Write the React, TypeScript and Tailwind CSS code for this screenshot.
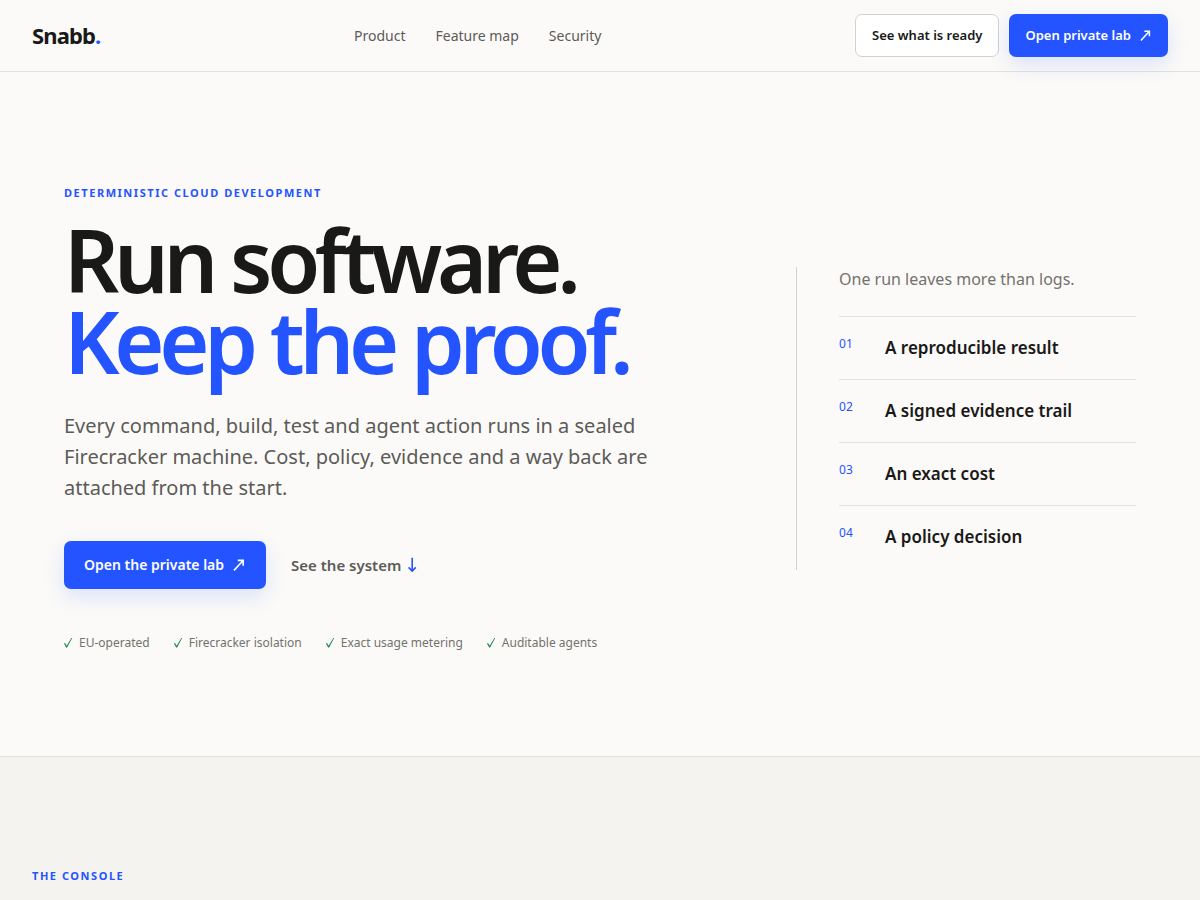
const navLinks = [
  { label: 'Product', href: '#product' },
  { label: 'Feature map', href: '#features' },
  { label: 'Security', href: '#security' },
];

const outcomes = [
  'A reproducible result',
  'A signed evidence trail',
  'An exact cost',
  'A policy decision',
];

const assurances = [
  'EU-operated',
  'Firecracker isolation',
  'Exact usage metering',
  'Auditable agents',
];

function ArrowUpRight({ className }: { className: string }) {
  return (
    <svg viewBox="0 0 14 14" fill="none" stroke="currentColor" strokeWidth="1.6" className={className} aria-hidden="true">
      <path d="M2 12.4 10.9 2.7M5.8 2.4h5.4v5.4" />
    </svg>
  );
}

function ArrowDown() {
  return (
    <svg viewBox="0 0 10 16" fill="none" stroke="currentColor" strokeWidth="1.6" className="h-4 w-2.5 text-[#2454ff]" aria-hidden="true">
      <path d="M5.2 0.8v13M1.6 10.4 5.2 14l3.6-3.6" />
    </svg>
  );
}

function Check() {
  return (
    <svg viewBox="0 0 9 12" fill="none" className="h-3 w-[9px] text-[#16834a]" aria-hidden="true">
      <path d="M0 6.6 1 6 2.7 8.8 7.4 1 8.2 1 3.1 10.6 2.2 10.6Z" fill="currentColor" />
    </svg>
  );
}

function Header() {
  return (
    <header className="border-b border-[#e3e2de]">
      <div className="flex flex-wrap items-center justify-between gap-4 px-8 py-3.5">
        <a href="#top" className="text-[22px] font-bold leading-[29px] tracking-[-0.04em]">
          Snabb<span className="text-[#2454ff]">.</span>
        </a>

        <nav className="flex items-center gap-[30px] text-sm text-[#5c5b57]">
          {navLinks.map((link) => (
            <a key={link.href} href={link.href} className="hover:text-[#191917]">
              {link.label}
            </a>
          ))}
        </nav>

        <div className="flex items-center gap-2.5 text-[13px] font-semibold">
          <button
            type="button"
            className="flex h-[43px] items-center rounded-[7px] border border-[#d2d1cc] bg-white px-4"
          >
            See what is ready
          </button>
          <button
            type="button"
            className="flex h-[43px] items-center gap-2 rounded-[7px] bg-[#2454ff] px-4 text-white shadow-[0_8px_20px_rgba(36,84,255,0.14)]"
          >
            Open private lab <ArrowUpRight className="size-[13px]" />
          </button>
        </div>
      </div>
    </header>
  );
}

function Eyebrow({ children }: { children: string }) {
  return (
    <p className="text-[11px] font-bold uppercase leading-[18px] tracking-[0.14em] text-[#2454ff]">
      {children}
    </p>
  );
}

function RunOutcomes() {
  return (
    <aside className="border-l border-[#d2d1cc] pb-0.5 pl-[42px]">
      <p className="pb-6 text-base leading-[25px] text-[#73726d]">One run leaves more than logs.</p>
      <ol>
        {outcomes.map((title, i) => (
          <li
            key={title}
            className="grid grid-cols-[34px_1fr] gap-3 border-t border-[#e3e2de] py-[18px]"
          >
            <span className="text-xs leading-[18px] text-[#2454ff]">0{i + 1}</span>
            <strong className="text-[17px] font-semibold leading-[26px]">{title}</strong>
          </li>
        ))}
      </ol>
    </aside>
  );
}

function Hero() {
  return (
    <section className="grid items-center gap-20 px-8 pb-[103px] pt-28 md:px-16 lg:grid-cols-[1fr_340px]">
      <div>
        <Eyebrow>Deterministic cloud development</Eyebrow>
        <h1 className="mt-[17px] text-6xl font-semibold leading-none tracking-[-0.062em] md:text-[86px] md:leading-[81px]">
          Run software.
          <span className="block text-[#2454ff]">Keep the proof.</span>
        </h1>
        <p className="mt-[29px] max-w-[620px] text-xl leading-[31px] text-[#5c5b57]">
          Every command, build, test and agent action runs in a sealed Firecracker machine. Cost,
          policy, evidence and a way back are attached from the start.
        </p>

        <div className="mt-[38px] flex flex-wrap items-center gap-[25px] font-semibold">
          <button
            type="button"
            className="flex h-12 items-center gap-2 rounded-[7px] bg-[#2454ff] px-5 text-sm text-white shadow-[0_8px_20px_rgba(36,84,255,0.14)]"
          >
            Open the private lab <ArrowUpRight className="size-3.5" />
          </button>
          <a href="#system" className="flex items-center gap-1.5 text-[15px] leading-[22px] text-[#5c5b57]">
            See the system <ArrowDown />
          </a>
        </div>

        <ul className="mt-11 flex flex-wrap gap-x-6 gap-y-2 text-xs leading-5 text-[#73726d]">
          {assurances.map((item) => (
            <li key={item} className="flex items-center gap-1.5">
              <Check />
              {item}
            </li>
          ))}
        </ul>
      </div>

      <RunOutcomes />
    </section>
  );
}

export default function App() {
  return (
    <div
      id="top"
      className="flex min-h-screen flex-col bg-[#fbfaf8] font-['Noto_Sans',system-ui,sans-serif] text-[#191917]"
    >
      <Header />
      <main className="flex flex-1 flex-col">
        <Hero />
        <section className="flex-1 border-t border-[#e3e2de] bg-[#f4f3ef] px-8 pt-[110px]">
          <Eyebrow>The console</Eyebrow>
        </section>
      </main>
    </div>
  );
}
